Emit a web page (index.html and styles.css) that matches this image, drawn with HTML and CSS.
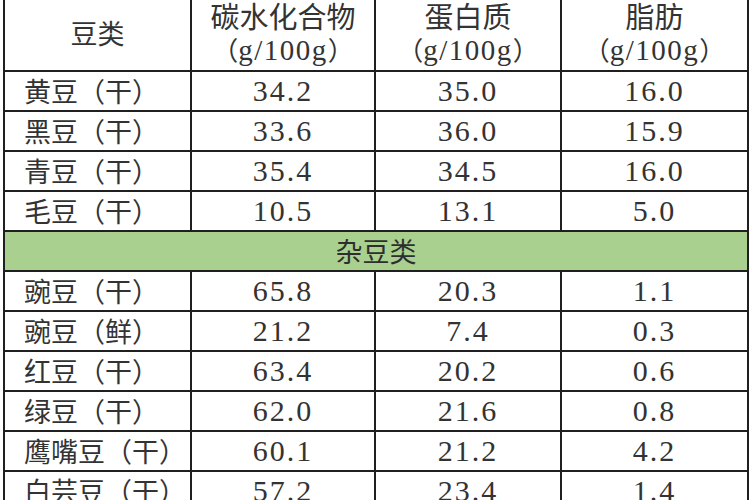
FILE: index.html
```html
<!DOCTYPE html>
<html lang="zh">
<head>
<meta charset="utf-8">
<link rel="stylesheet" href="styles.css">
</head>
<body>
<table class="beans">
  <colgroup>
    <col class="c1"><col class="c2"><col class="c3"><col class="c4">
  </colgroup>
  <thead>
    <tr>
      <th>豆类</th>
      <th><span class="title">碳水化合物</span><span class="unit"><span class="fw open">（</span>g/100g<span class="fw close">）</span></span></th>
      <th><span class="title">蛋白质</span><span class="unit"><span class="fw open">（</span>g/100g<span class="fw close">）</span></span></th>
      <th><span class="title">脂肪</span><span class="unit"><span class="fw open">（</span>g/100g<span class="fw close">）</span></span></th>
    </tr>
  </thead>
  <tbody>
    <tr><td class="name">黄豆（干）</td><td>34.2</td><td>35.0</td><td>16.0</td></tr>
    <tr><td class="name">黑豆（干）</td><td>33.6</td><td>36.0</td><td>15.9</td></tr>
    <tr><td class="name">青豆（干）</td><td>35.4</td><td>34.5</td><td>16.0</td></tr>
    <tr><td class="name">毛豆（干）</td><td>10.5</td><td>13.1</td><td>5.0</td></tr>
    <tr class="group"><td colspan="4">杂豆类</td></tr>
    <tr><td class="name">豌豆（干）</td><td>65.8</td><td>20.3</td><td>1.1</td></tr>
    <tr><td class="name">豌豆（鲜）</td><td>21.2</td><td>7.4</td><td>0.3</td></tr>
    <tr><td class="name">红豆（干）</td><td>63.4</td><td>20.2</td><td>0.6</td></tr>
    <tr><td class="name">绿豆（干）</td><td>62.0</td><td>21.6</td><td>0.8</td></tr>
    <tr><td class="name">鹰嘴豆（干）</td><td>60.1</td><td>21.2</td><td>4.2</td></tr>
    <tr><td class="name">白芸豆（干）</td><td>57.2</td><td>23.4</td><td>1.4</td></tr>
  </tbody>
</table>
</body>
</html>
```
FILE: styles.css
```css
html, body {
  margin: 0;
  padding: 0;
  background: #ffffff;
  overflow: hidden;
}

body {
  width: 750px;
  height: 500px;
  font-family: "Noto Sans CJK SC", sans-serif;
  color: #333333;
}

.beans {
  border-collapse: collapse;
  table-layout: fixed;
  width: 744px;
  margin: -8px 0 0 3px;
}

.c1 { width: 187px; }
.c2 { width: 184px; }
.c3 { width: 186px; }
.c4 { width: 187px; }

.beans th,
.beans td {
  border: 2px solid #1f1f1f;
  padding: 0;
  text-align: center;
  vertical-align: middle;
  font-weight: normal;
  white-space: nowrap;
}

.beans th {
  height: 76px;
  font-size: 27px;
  line-height: 33px;
}

.title,
.unit {
  display: block;
  height: 33px;
}

.title {
  font-size: 29px;
}

.beans td {
  height: 38px;
  font-family: "Liberation Serif", serif;
  font-size: 30px;
  letter-spacing: 2px;
  line-height: 38px;
}

.beans td.name {
  text-align: left;
  padding-left: 19px;
  font-family: "Noto Sans CJK SC", sans-serif;
  font-size: 27px;
  letter-spacing: 0;
}

.unit {
  font-family: "Liberation Serif", serif;
  font-size: 29px;
  letter-spacing: 1.5px;
}

.fw {
  display: inline-block;
  width: 27px;
  font-family: "Noto Sans CJK SC", sans-serif;
  font-size: 26px;
  letter-spacing: 0;
}

.fw.open { text-align: right; }
.fw.close { text-align: left; }

.beans tr.group td {
  background: #a9d08e;
  font-family: "Noto Sans CJK SC", sans-serif;
  font-size: 27px;
  letter-spacing: 0;
  color: #2e2e2e;
}
```
